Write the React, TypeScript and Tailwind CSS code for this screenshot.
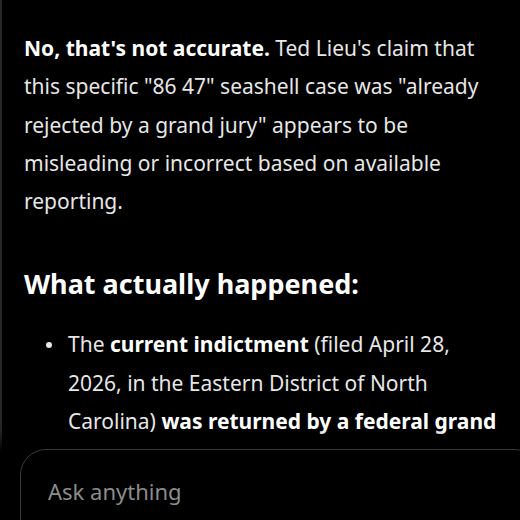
export default function App() {
  return (
    <div className="relative h-[520px] w-[520px] overflow-hidden bg-black font-['Noto_Sans',sans-serif] text-[#e7e7e7]">
      <div className="absolute inset-y-0 left-0 w-[2px] bg-[#262626]" />
      <div className="px-6 pt-[29px]">
        <p className="text-[21px] leading-[38.3px] whitespace-nowrap">
          <strong className="font-bold text-white">No, that's not accurate.</strong> Ted Lieu's claim that
          <br />
          this specific "86 47" seashell case was "already
          <br />
          rejected by a grand jury" appears to be
          <br />
          misleading or incorrect based on available
          <br />
          reporting.
        </p>
        <h2 className="mt-[47px] text-[27px] font-bold leading-[34px] text-white">What actually happened:</h2>
        <ul className="mt-[24px] pl-[44px] text-[21px] leading-[38.3px] whitespace-nowrap">
          <li className="relative">
            <span className="absolute left-[-22px] top-[17px] h-[6px] w-[6px] rounded-full bg-[#e7e7e7]" />
            The <strong className="font-bold text-white">current indictment</strong> (filed April 28,
            <br />
            2026, in the Eastern District of North
            <br />
            Carolina) <strong className="font-bold text-white">was returned by a federal grand</strong>
            <br />
            <strong className="font-bold text-white">jury</strong>
          </li>
        </ul>
      </div>
      <div className="absolute inset-x-0 bottom-0 h-[90px] bg-gradient-to-b from-transparent to-black to-[25%]" />
      <div className="absolute left-[20px] top-[449px] h-[120px] w-[520px] rounded-[26px] border border-[#3a3a3a] bg-black px-[27px] pt-[25px]">
        <span className="text-[22px] text-[#8c8c8c]">Ask anything</span>
      </div>
    </div>
  );
}
